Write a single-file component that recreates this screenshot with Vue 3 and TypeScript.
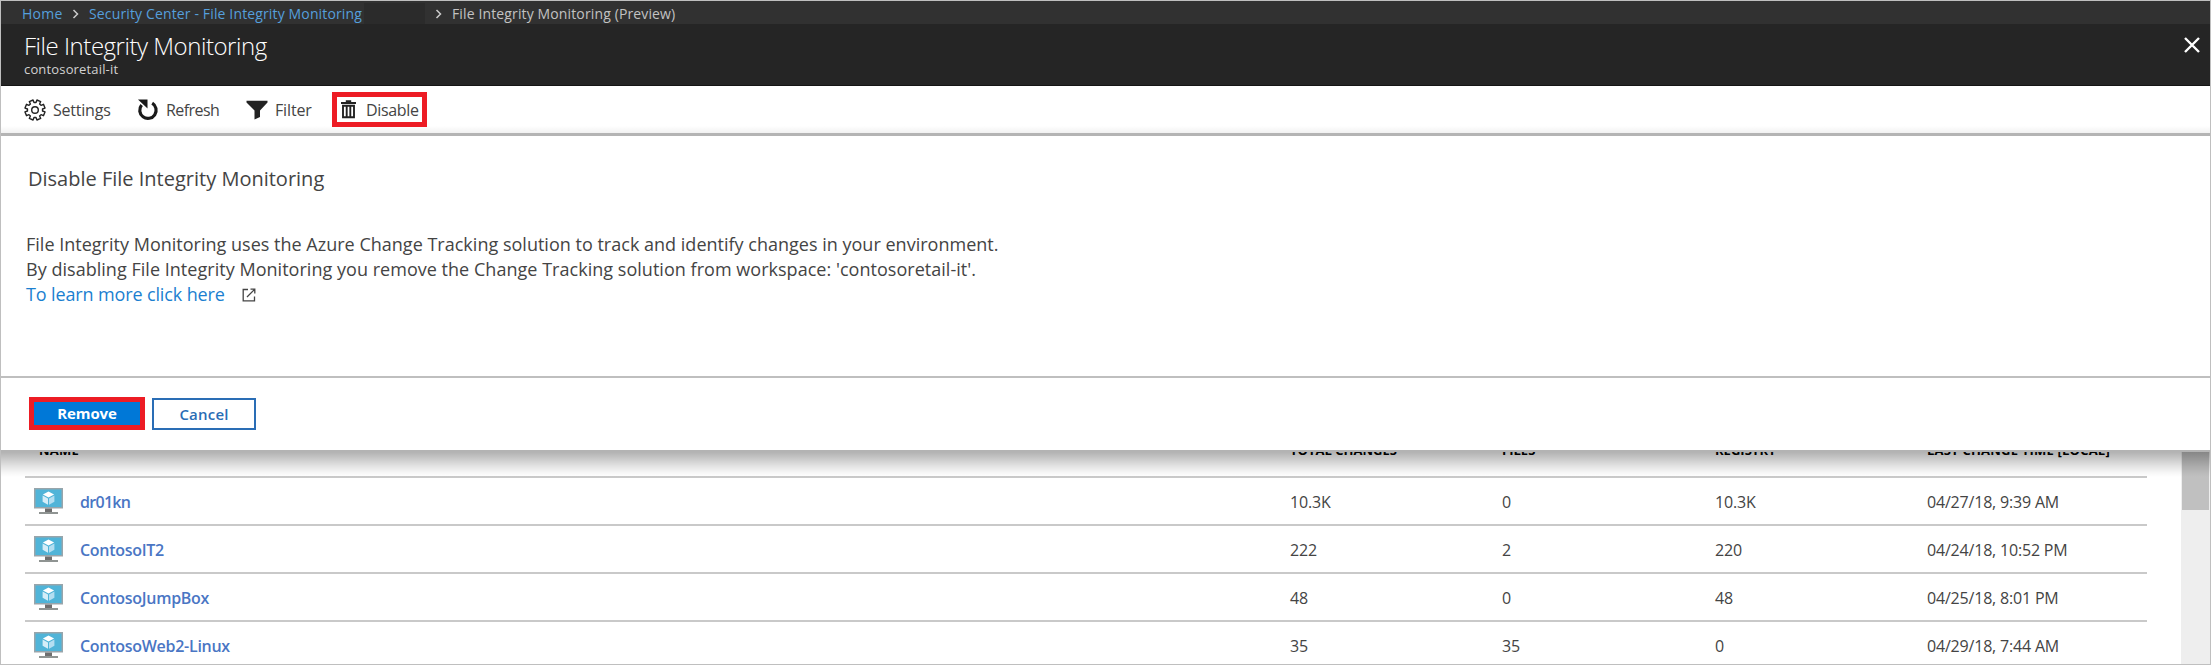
<script setup lang="ts">
interface Row {
  name: string
  spacing: string
  total: string
  files: string
  registry: string
  time: string
}

const rows: Row[] = [
  { name: 'dr01kn', spacing: 'tight', total: '10.3K', files: '0', registry: '10.3K', time: '04/27/18, 9:39 AM' },
  { name: 'ContosoIT2', spacing: '', total: '222', files: '2', registry: '220', time: '04/24/18, 10:52 PM' },
  { name: 'ContosoJumpBox', spacing: '', total: '48', files: '0', registry: '48', time: '04/25/18, 8:01 PM' },
  { name: 'ContosoWeb2-Linux', spacing: '', total: '35', files: '35', registry: '0', time: '04/29/18, 7:44 AM' },
]

// Outline of an eight-toothed gear centred on (11, 11)
const gear = (() => {
  const pts: string[] = []
  for (let i = 0; i < 8; i++) {
    const a = (i * Math.PI) / 4 + Math.PI / 8
    const steps: [number, number][] = [[-0.26, 7.6], [-0.2, 10.2], [0.2, 10.2], [0.26, 7.6]]
    for (const [d, r] of steps) {
      pts.push(`${(11 + r * Math.sin(a + d)).toFixed(2)} ${(11 - r * Math.cos(a + d)).toFixed(2)}`)
    }
  }
  return `M${pts.join('L')}Z`
})()
</script>

<template>
  <div class="blade">
    <nav class="crumbs">
      <a class="home">Home</a>
      <svg class="chev c1" viewBox="0 0 7 10"><path d="M1.5 1l4 4-4 4" /></svg>
      <a class="center">Security Center - File Integrity Monitoring</a>
      <span class="blank"></span>
      <svg class="chev c2" viewBox="0 0 7 10"><path d="M1.5 1l4 4-4 4" /></svg>
      <span class="here">File Integrity Monitoring (Preview)</span>
    </nav>
    <header class="head">
      <div>
        <h1>File Integrity Monitoring</h1>
        <p>contosoretail-it</p>
      </div>
      <svg class="close" viewBox="0 0 18 18"><path d="M2 2l14 14M16 2L2 16" /></svg>
    </header>
    <div class="tools">
      <button class="tool settings">
        <svg width="22" height="22" viewBox="0 0 22 22" fill="none" stroke="#222" stroke-width="1.4" stroke-linejoin="round">
          <path :d="gear" /><circle cx="11" cy="11" r="3.3" />
        </svg>
        <span>Settings</span>
      </button>
      <button class="tool refresh">
        <svg width="22" height="22" viewBox="0 0 22 22">
          <path d="M15.2 4.2A8.2 8.2 0 1 1 4.6 6" fill="none" stroke="#1a1a1a" stroke-width="3.2" />
          <path d="M1 .6h9.5v9z" fill="#1a1a1a" />
        </svg>
        <span>Refresh</span>
      </button>
      <button class="tool filter">
        <svg width="22" height="20" viewBox="0 0 22 20"><path d="M.5.8h21v1.6L14 10.5V17l-5.5 2.4v-8.9L.5 2.4z" fill="#222" /></svg>
        <span>Filter</span>
      </button>
      <button class="tool disable">
        <svg width="15" height="19" viewBox="0 0 15 19" fill="none" stroke="#222">
          <path d="M0 3h15M4.8 1.2h5.4" stroke-width="1.8" />
          <path d="M2 5.7h11v11.5H2zM5.7 6v11M9.3 6v11" stroke-width="1.9" />
        </svg>
        <span>Disable</span>
      </button>
    </div>
    <section class="panel">
      <div class="body">
        <h2>Disable File Integrity Monitoring</h2>
        <p class="l1">File Integrity Monitoring uses the Azure Change Tracking solution to track and identify changes in your environment.</p>
        <p class="l2">By disabling File Integrity Monitoring you remove the Change Tracking solution from workspace: 'contosoretail-it'.</p>
        <p class="more">
          <a>To learn more click here</a>
          <svg width="14" height="14" viewBox="0 0 14 14"><path d="M6 1.5H1.2v11.3h11.3V8.5M8.5 1.2h4.3v4.3M12.6 1.4L5 9" /></svg>
        </p>
      </div>
      <div class="actions">
        <button class="remove">Remove</button>
        <button class="cancel">Cancel</button>
      </div>
    </section>
    <main class="list">
      <div class="grid">
        <div class="row titles">
          <span class="namehead">NAME</span><span>TOTAL CHANGES</span><span>FILES</span><span>REGISTRY</span><span class="timehead">LAST CHANGE TIME [LOCAL]</span>
        </div>
        <div v-for="r in rows" :key="r.name" class="row">
          <span class="name">
            <svg width="29" height="27" viewBox="0 0 29 27">
              <path d="M0 0h29v20.5H0z" fill="#98a5ab" />
              <path d="M1.5 1.5h26v17.5h-26z" fill="#50b4d8" />
              <path d="M11 20.5h7V24h-7z" fill="#6f6f6f" />
              <path d="M5 24h19v2H5z" fill="#8f9492" />
              <path d="M14.5 3.5l5.6 3-5.6 3-5.6-3z" fill="#fff" />
              <path d="M8.6 7.6l5.4 2.9v6.3l-5.4-3z" fill="#d5edf8" />
              <path d="M20.4 7.6L15 10.5v6.3l5.4-3z" fill="#b4def1" />
            </svg>
            <a :class="r.spacing">{{ r.name }}</a>
          </span>
          <span>{{ r.total }}</span><span>{{ r.files }}</span><span>{{ r.registry }}</span><span>{{ r.time }}</span>
        </div>
      </div>
      <div class="scroll"><div class="thumb"></div></div>
      <div class="shade"></div>
    </main>
  </div>
</template>

<style>
body { background: #fff; }
</style>
<style scoped>
* { box-sizing: border-box; }
.blade {
  width: 2211px; height: 665px; overflow: hidden;
  display: flex; flex-direction: column;
  border: 1px solid #bfbfbf; background: #fff; color: #444;
  font-family: "Open Sans", "Noto Sans", sans-serif; white-space: nowrap;
}
h1, h2, p { margin: 0; font-weight: 400; }
button { font: inherit; margin: 0; padding: 0; background: none; border: 0; color: inherit; }
svg { flex: none; }
.crumbs {
  height: 23px; flex: none; display: flex; align-items: center;
  padding: 2px 0 0 21px; background: #313131; font-size: 14px; line-height: 20px;
}
.crumbs a { color: #559fdc; }
.home { width: 50px; letter-spacing: .3px; }
.center { width: 275px; letter-spacing: .14px; }
.chev { width: 7px; height: 10px; fill: none; stroke: #ccc; stroke-width: 1.5; }
.c1 { margin-right: 10px; }
.c2 { margin: 0 10px 0 10px; }
.blank { width: 61px; height: 22px; background: #2b2b2b; }
.here { color: #c2c2c2; letter-spacing: .13px; }
.head {
  height: 62px; flex: none; display: flex; justify-content: space-between;
  padding: 4px 9px 0 23px; background: #252525; border-bottom: 1px solid #151515;
}
h1 { font-size: 24px; line-height: 36px; font-weight: 300; letter-spacing: -.46px; color: #fff; }
.head p { font-size: 13px; line-height: 10px; letter-spacing: .16px; color: #d2d2d2; }
.close { width: 18px; height: 18px; margin-top: 8px; fill: none; stroke: #fff; stroke-width: 2.4; }
.tools {
  height: 50px; flex: none; display: flex; align-items: center; padding-left: 23px;
  border-bottom: 3px solid #b4b4b4; font-size: 16px; line-height: 22px;
  background: linear-gradient(#fff 85%, #f1f1f1);
}
.tool { display: flex; align-items: center; }
.settings { width: 113px; gap: 7px; letter-spacing: -.22px; }
.refresh { width: 109px; gap: 7px; letter-spacing: -.55px; }
.filter { width: 86px; gap: 7px; letter-spacing: -.15px; }
.disable { width: 95px; height: 35px; gap: 10px; padding-left: 4px; border: 5px solid #ed1c24; letter-spacing: -.34px; }
.panel { height: 314px; flex: none; display: flex; flex-direction: column; background: #fff; }
.body { height: 240px; padding: 29px 0 0 25px; font-size: 18px; line-height: 25px; }
h2 { height: 67px; padding-left: 2px; font-size: 20px; line-height: 28px; letter-spacing: 0; }
.l1 { letter-spacing: .01px; }
.l2 { letter-spacing: .03px; }
.more { display: flex; align-items: center; gap: 17px; }
.more a { color: #1b7fd0; letter-spacing: -.13px; }
.more svg { fill: none; stroke: #444; stroke-width: 1.3; }
.actions { flex: 1; display: flex; gap: 7px; padding: 19px 0 0 28px; border-top: 2px solid #bfbfbf; }
.remove {
  width: 116px; height: 33px; border: 5px solid #ed1c24; background: #0078d7;
  color: #fff; font-size: 15px; font-weight: 700; line-height: 23px; letter-spacing: -.15px;
}
.cancel {
  width: 104px; height: 32px; margin-top: 1px; border: 2px solid #2a6db5;
  color: #2a6db5; font-size: 15px; font-weight: 600; line-height: 25px; letter-spacing: .2px;
}
.list { flex: 1; min-height: 0; position: relative; display: flex; overflow: hidden; }
.grid { width: 2122px; margin-left: 24px; flex: none; }
.row {
  height: 48px; display: grid; grid-template-columns: 1265px 212px 213px 212px 1fr;
  align-items: center; padding-top: 1px; border-bottom: 2px solid #c9c9c9; font-size: 16px; letter-spacing: -.19px;
}
.titles {
  height: 28px; padding: 0; align-items: start; font-size: 13px; line-height: 0;
  font-weight: 700; letter-spacing: .02px; color: #000;
}
.namehead { padding-left: 14px; letter-spacing: .23px; }
.timehead { letter-spacing: .21px; }
.name { display: flex; align-items: center; gap: 17px; padding-left: 9px; }
.name a { padding-top: 1px; font-weight: 600; color: #4a76c4; letter-spacing: -.28px; }
.name .tight { letter-spacing: -.7px; }
.scroll { margin-left: auto; width: 29px; padding: 0 1px; background: #eee; }
.thumb { height: 60px; background: #c0c0c0; }
.shade {
  position: absolute; inset: 0 0 auto; height: 27px;
  background: linear-gradient(#b3b3b3 2px, rgba(0,0,0,.3) 2px, rgba(0,0,0,.25) 22%, rgba(0,0,0,.11) 60%, rgba(0,0,0,.03) 85%, transparent);
}
</style>
